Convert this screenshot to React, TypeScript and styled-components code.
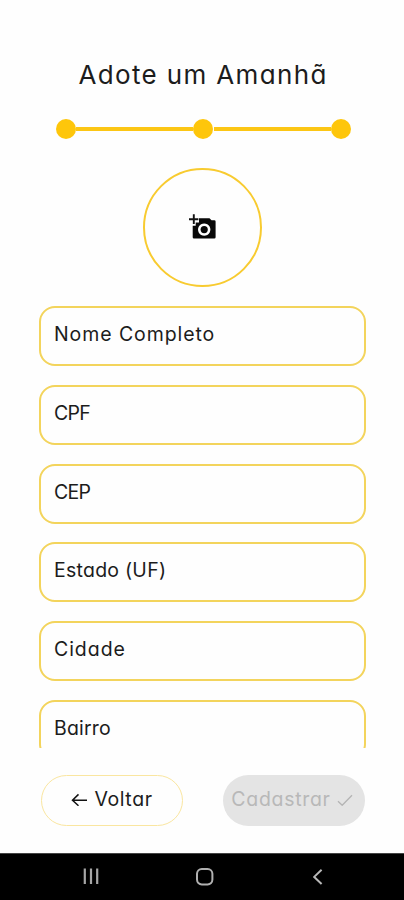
import React from "react";
import styled, { createGlobalStyle } from "styled-components";

const GlobalStyle = createGlobalStyle`
  * { box-sizing: border-box; }
  body { margin: 0; background: #fefefe; }
  button { font: inherit; }
`;

const Screen = styled.div`
  width: 404px;
  height: 900px;
  display: flex;
  flex-direction: column;
  overflow: hidden;
  background: #fefefe;
  color: #1c1c1c;
  font-family: Inter, "Open Sans", sans-serif;
  font-weight: 400;
  font-feature-settings: "cv11";
`;

const Title = styled.h1`
  margin: 58px 0 0;
  height: 34px;
  line-height: 34px;
  padding-left: 78.5px;
  font-size: 26px;
  font-weight: 400;
  letter-spacing: 1.35px;
  white-space: nowrap;
`;

const Stepper = styled.div`
  display: flex;
  align-items: center;
  margin: 26.5px 53.5px 0 55.5px;
  height: 20px;
`;

const Dot = styled.span`
  width: 20px;
  height: 20px;
  border-radius: 50%;
  background: #fec60b;
`;

const Track = styled.span<{ $gap?: number }>`
  flex: 1;
  height: 4px;
  margin-left: ${(p) => p.$gap ?? 0}px;
  background: #fcc614;
`;

const PhotoButton = styled.button`
  display: flex;
  flex: none;
  align-items: center;
  justify-content: center;
  width: 119px;
  height: 119px;
  margin: 29px 0 0 143.4px;
  padding: 0;
  border: 2px solid #f8cb30;
  border-radius: 50%;
  background: transparent;
`;

const Form = styled.div`
  display: flex;
  flex-direction: column;
  gap: 18.8px;
  height: 442px;
  margin-top: 19.5px;
  padding: 0 38px 0 39px;
  overflow: hidden;
`;

const Field = styled.div`
  flex: none;
  height: 60px;
  padding: 13px 13px;
  border: 2px solid #f3d45c;
  border-radius: 16px;
`;

const Label = styled.span<{ $tracking: number }>`
  display: block;
  font-size: 19.5px;
  line-height: 26px;
  letter-spacing: ${(p) => p.$tracking}px;
  white-space: nowrap;
`;

const Actions = styled.div`
  display: flex;
  justify-content: space-between;
  padding: 0 39.5px 0 41px;
  margin-top: 27px;
`;

const Action = styled.button<{ $muted?: boolean }>`
  display: flex;
  align-items: center;
  justify-content: center;
  gap: 6px;
  width: 142px;
  height: 51px;
  padding: ${(p) => (p.$muted ? "0 3px 3px 0" : "0 0 3px")};
  border: ${(p) => (p.$muted ? "0" : "1.5px solid #fae6a0")};
  border-radius: 26px;
  background: ${(p) => (p.$muted ? "#e4e4e4" : "transparent")};
  color: ${(p) => (p.$muted ? "#b8b8b8" : "#1c1c1c")};
`;

const NavBar = styled.nav`
  display: flex;
  align-items: center;
  justify-content: space-between;
  height: 47px;
  margin-top: auto;
  padding: 0 81px 0 83px;
  border-top: 1px solid #444;
  background: #000;
`;

const CameraIcon = () => (
  <svg width="28" height="26" viewBox="0 0 28 26">
    <path
      fill="#080808"
      fillRule="evenodd"
      d="M10 4.3H20.5L22.5 6.3H25.3Q26.6 6.3 26.6 7.6V23.2Q26.6 24.4 25.3 24.4H5Q3.7 24.4 3.7 23.2V11.8H6.7V8.6H10ZM15.2 9.4a6.2 6.2 0 1 0 .01 0Z"
    />
    <circle cx="15.2" cy="15.6" r="3.6" fill="#080808" />
    <path d="M4.8 .3v9.8M0 5.2h9.4" stroke="#111" strokeWidth="1.9" />
  </svg>
);

const ArrowIcon = () => (
  <svg width="17" height="14" viewBox="0 0 17 14" fill="none" stroke="#111" strokeWidth="1.5">
    <path d="M16 8.3H1.3M7.5 2.4 1.5 8.3l6 5.4" />
  </svg>
);

const CheckIcon = () => (
  <svg width="16" height="13" viewBox="0 0 16 13" fill="none" stroke="#b4b4b4" strokeWidth="1.3">
    <path d="m1 8.3 4.2 4L15 2.3" />
  </svg>
);

const RecentsIcon = () => (
  <svg width="18" height="18" viewBox="0 0 18 18" stroke="#a6a6a6" strokeWidth="2.2">
    <path d="M1.8 .6v15.5M8 .6v15.5M14.2 .6v15.5" />
  </svg>
);

const HomeIcon = () => (
  <svg width="22" height="18" viewBox="0 0 22 18" fill="none" stroke="#b0b0b0" strokeWidth="2">
    <rect x="1" y="1" width="15.4" height="15.4" rx="4.8" />
  </svg>
);

const BackIcon = () => (
  <svg width="10" height="17" viewBox="0 0 10 17" fill="none" stroke="#b8b8b8" strokeWidth="2">
    <path d="M8.6 .8 1.2 7.9 8.6 15" />
  </svg>
);

const fields = [
  { label: "Nome Completo", tracking: 0.92 },
  { label: "CPF", tracking: -0.7 },
  { label: "CEP", tracking: -0.7 },
  { label: "Estado (UF)", tracking: 0.25 },
  { label: "Cidade", tracking: 0.95 },
  { label: "Bairro", tracking: 0.2 },
];

export default function App() {
  return (
    <Screen>
      <GlobalStyle />
      <Title>Adote um Amanhã</Title>
      <Stepper>
        <Dot />
        <Track />
        <Dot />
        <Track $gap={1} />
        <Dot />
      </Stepper>
      <PhotoButton aria-label="Adicionar foto">
        <CameraIcon />
      </PhotoButton>
      <Form>
        {fields.map((f) => (
          <Field key={f.label}>
            <Label $tracking={f.tracking}>{f.label}</Label>
          </Field>
        ))}
      </Form>
      <Actions>
        <Action>
          <ArrowIcon />
          <Label $tracking={0.6}>Voltar</Label>
        </Action>
        <Action $muted disabled>
          <Label $tracking={0.7}>Cadastrar</Label>
          <CheckIcon />
        </Action>
      </Actions>
      <NavBar>
        <RecentsIcon />
        <HomeIcon />
        <BackIcon />
      </NavBar>
    </Screen>
  );
}
